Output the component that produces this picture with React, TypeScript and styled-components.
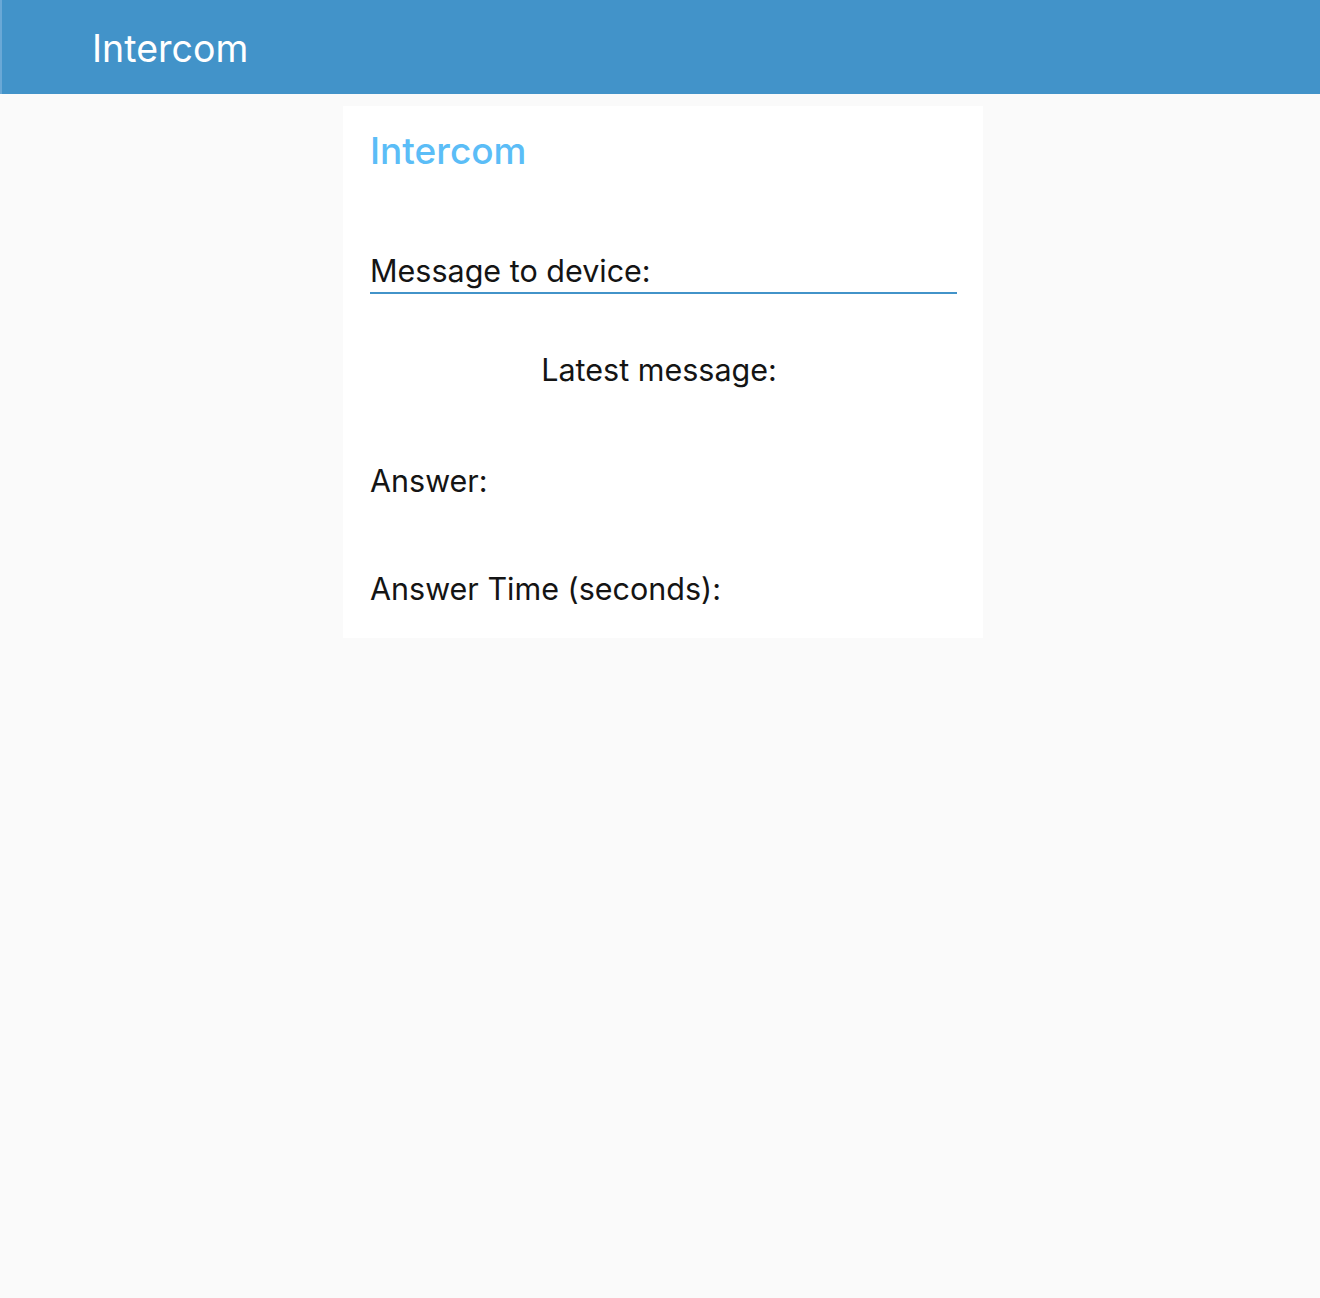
import React from "react";
import styled, { createGlobalStyle } from "styled-components";

const Global = createGlobalStyle`
  html, body { margin: 0; padding: 0; }
  body {
    background: #fafafa;
    font-family: Inter, "Noto Sans", sans-serif;
    color: #111;
    min-height: 1298px;
  }
`;

const Header = styled.header`
  height: 94px;
  background: #4293c9;
  border-left: 2px solid #6aa8d6;
  box-sizing: border-box;
  display: flex;
  align-items: center;
  padding-left: 90px;
`;

const HeaderTitle = styled.h1`
  margin: 0;
  font-size: 37.5px;
  font-weight: 400;
  color: #fff;
  letter-spacing: 0;
  padding-top: 2px;
`;

const Main = styled.main`
  display: flex;
  justify-content: center;
  padding-top: 12px;
  padding-left: 6px;
`;

const Card = styled.section`
  width: 640px;
  background: #fff;
  box-sizing: border-box;
  padding: 22px 26px 31px 27px;
  display: flex;
  flex-direction: column;
`;

const CardTitle = styled.h2`
  margin: 0;
  font-size: 37px;
  font-weight: 500;
  color: #5bbdf7;
  line-height: 46px;
`;

const Field = styled.div`
  margin-top: 79px;
  border-bottom: 2px solid #4293c9;
  padding-bottom: 3px;
`;

const Label = styled.div<{ $center?: boolean }>`
  font-size: 30.5px;
  line-height: 36px;
  color: #141414;
  text-align: ${(p) => (p.$center ? "center" : "left")};
  padding-right: ${(p) => (p.$center ? "9px" : "0")};
`;

const Row = styled.div<{ $gap: number }>`
  margin-top: ${(p) => p.$gap}px;
`;

export default function App() {
  return (
    <>
      <Global />
      <Header>
        <HeaderTitle>Intercom</HeaderTitle>
      </Header>
      <Main>
        <Card>
          <CardTitle>Intercom</CardTitle>
          <Field>
            <Label>Message to device:</Label>
          </Field>
          <Row $gap={58}>
            <Label $center>Latest message:</Label>
          </Row>
          <Row $gap={75}>
            <Label>Answer:</Label>
          </Row>
          <Row $gap={72}>
            <Label>Answer Time (seconds):</Label>
          </Row>
        </Card>
      </Main>
    </>
  );
}
